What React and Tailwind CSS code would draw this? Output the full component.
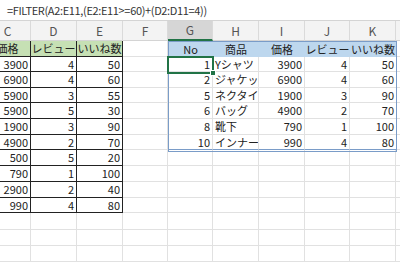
import React from 'react';

const font = { fontFamily: '"Noto Sans CJK JP", "Noto Sans", sans-serif' };

const cols = ['C', 'D', 'E', 'F', 'G', 'H', 'I', 'J', 'K', 'L'];
const rowHeights = [15, 16, 15, 16, 16, 15, 16, 16, 16, 15, 17, 16, 16];

const leftData = [
  [3900, 4, 50],
  [6900, 4, 60],
  [5900, 3, 55],
  [5900, 5, 30],
  [1900, 3, 90],
  [4900, 2, 70],
  [500, 5, 20],
  [790, 1, 100],
  [2900, 2, 40],
  [990, 4, 80],
];

const rightData = [
  [1, 'Yシャツ', 3900, 4, 50],
  [2, 'ジャケット', 6900, 4, 60],
  [5, 'ネクタイ', 1900, 3, 90],
  [6, 'バッグ', 4900, 2, 70],
  [8, '靴下', 790, 1, 100],
  [10, 'インナー', 990, 4, 80],
];

function Cell({ children, className = '', right }) {
  return (
    <div
      className={`h-full overflow-hidden whitespace-nowrap px-[2px] text-[11px] leading-none text-[#222] flex items-center ${
        right ? 'justify-end' : 'justify-start'
      } ${className}`}
    >
      {children}
    </div>
  );
}

function Empty() {
  return <div className="border-r border-b border-[#e1e1e1]" />;
}

export default function App() {
  return (
    <div className="w-[400px] h-[264px] overflow-hidden bg-white relative" style={font}>
      {/* formula bar */}
      <div className="h-[21px] border-b border-[#d4d4d4] flex items-center pl-[7px] text-[11px] tracking-[-0.35px] text-[#333] whitespace-nowrap">
        =FILTER(A2:E11,(E2:E11&gt;=60)+(D2:D11=4))
      </div>

      <div className="-ml-[15px]">
        {/* column letters */}
        <div className="grid grid-cols-[46px_46px_46px_45px_45px_46px_46px_45px_46px_46px] h-[20px] bg-[#f3f3f3] border-b border-[#d4d4d4]">
          {cols.map((c) => (
            <div
              key={c}
              className={`flex items-center justify-center text-[12px] text-[#555] border-r border-[#dadada] ${
                c === 'G' ? 'bg-[#d6d6d6] border-b-2 border-b-[#217346]' : ''
              }`}
            >
              {c}
            </div>
          ))}
        </div>

        {/* header row */}
        <div className="grid grid-cols-[46px_46px_46px_45px_45px_46px_46px_45px_46px_46px] h-[16px]">
          {['価格', 'レビュー', 'いいね数'].map((t) => (
            <div
              key={t}
              className="bg-[#c6e0b4] border-r border-b border-[#222] flex items-center justify-center text-[11px] leading-none text-[#222] whitespace-nowrap overflow-hidden"
            >
              {t}
            </div>
          ))}
          <Empty />
          {['No', '商品', '価格', 'レビュー', 'いいね数'].map((t) => (
            <div
              key={t}
              className="bg-[#bdd7ee] flex items-center justify-center text-[11px] leading-none text-[#222] whitespace-nowrap overflow-hidden"
            >
              {t}
            </div>
          ))}
          <div className="border-b border-r border-[#e1e1e1]" />
        </div>

        {/* data rows */}
        {rowHeights.map((h, i) => {
          const l = leftData[i];
          const r = rightData[i];
          const inSpill = i < rightData.length;
          const bottom = i === rightData.length - 1 ? 'border-b-[#7a9cc8]' : 'border-b-[#e1e1e1]';
          return (
            <div
              key={i}
              className="grid grid-cols-[46px_46px_46px_45px_45px_46px_46px_45px_46px_46px]"
              style={{ height: h }}
            >
              {l ? (
                <>
                  <Cell right className="border-r border-b border-[#222]">{l[0]}</Cell>
                  <Cell right className="border-r border-b border-[#222]">{l[1]}</Cell>
                  <Cell right className="border-r border-b border-[#222]">{l[2]}</Cell>
                </>
              ) : (
                <>
                  <Empty />
                  <Empty />
                  <Empty />
                </>
              )}
              <Empty />
              {inSpill ? (
                <>
                  <Cell right className={`border-r border-b border-r-[#e1e1e1] ${bottom}`}>{r[0]}</Cell>
                  <Cell className={`border-r border-b border-r-[#e1e1e1] ${bottom}`}>{r[1]}</Cell>
                  <Cell right className={`border-r border-b border-r-[#e1e1e1] ${bottom}`}>{r[2]}</Cell>
                  <Cell right className={`border-r border-b border-r-[#e1e1e1] ${bottom}`}>{r[3]}</Cell>
                  <Cell right className={`border-b ${bottom}`}>{r[4]}</Cell>
                  <div className="border-b border-r border-[#e1e1e1]" />
                </>
              ) : (
                <>
                  <Empty />
                  <Empty />
                  <Empty />
                  <Empty />
                  <Empty />
                  <Empty />
                </>
              )}
            </div>
          );
        })}
      </div>

      {/* spill range outline */}
      <div className="absolute left-[168px] top-[41px] w-[229px] h-[111px] border border-[#7a9cc8] pointer-events-none" />
      {/* selected cell G2 */}
      <div className="absolute left-[167px] top-[56px] w-[47px] h-[18px] border-2 border-[#217346] pointer-events-none">
        <span className="absolute -right-[4px] -bottom-[4px] w-[6px] h-[6px] bg-[#217346] border border-white" />
      </div>
    </div>
  );
}
